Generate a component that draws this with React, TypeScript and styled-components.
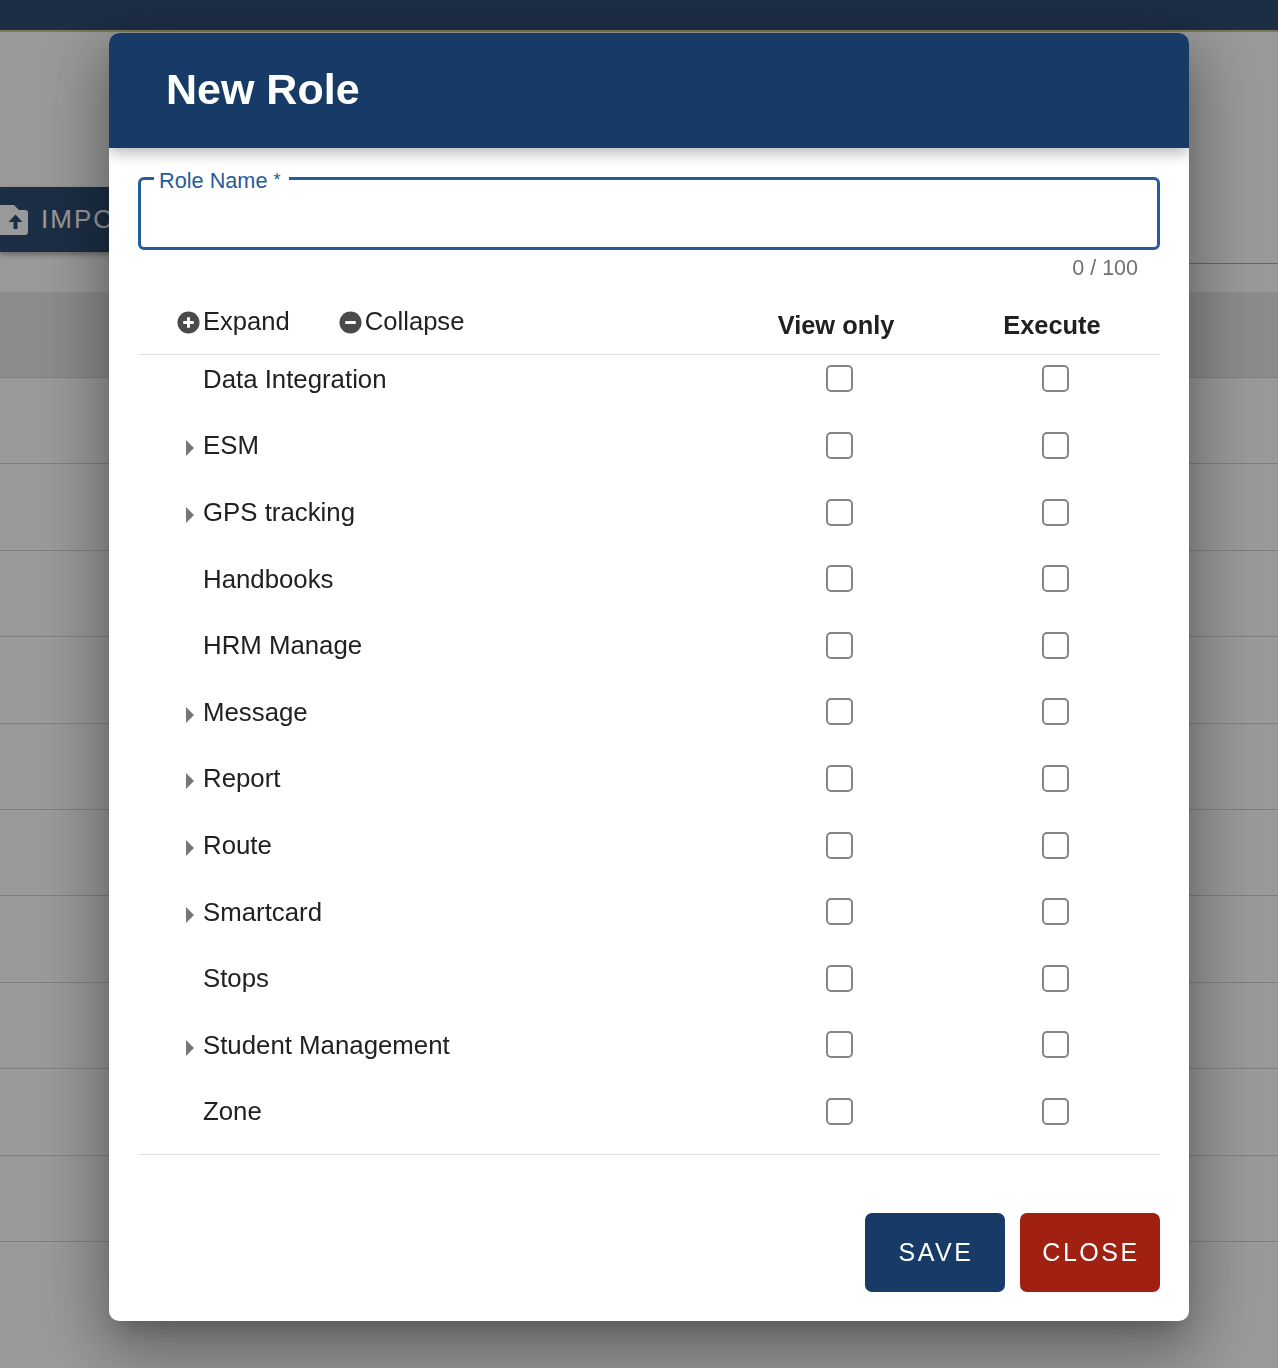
import React, { FC } from 'react';
import styled, { createGlobalStyle } from 'styled-components';

const modules = [
  { name: 'Data Integration', nested: false },
  { name: 'ESM', nested: true },
  { name: 'GPS tracking', nested: true },
  { name: 'Handbooks', nested: false },
  { name: 'HRM Manage', nested: false },
  { name: 'Message', nested: true },
  { name: 'Report', nested: true },
  { name: 'Route', nested: true },
  { name: 'Smartcard', nested: true },
  { name: 'Stops', nested: false },
  { name: 'Student Management', nested: true },
  { name: 'Zone', nested: false },
];

const backgroundRows = Array.from({ length: 10 }, (_, i) => i);

const App: FC = () => {
  return (
    <>
      <GlobalStyle />
      <Page>
        <TopBar />
        <Toolbar>
          <ImportButton>
            <svg width="28" height="30" viewBox="0 0 28 30">
              <path
                fill="#fff"
                d="M-2 0h16l5 5h6a3 3 0 0 1 3 3v19a3 3 0 0 1-3 3H-2z"
              />
              <path fill="#2f4d73" d="M15.5 9.5L8.5 17H13.5v7h4v-7h5z" />
            </svg>
            IMPORT
          </ImportButton>
          <SearchLine />
        </Toolbar>
        <TableHead />
        {backgroundRows.map(row => (
          <TableRow key={row} />
        ))}
      </Page>
      <Backdrop />
      <Modal>
        <ModalHeader>New Role</ModalHeader>
        <ModalBody>
          <Field>
            <FieldLabel>
              Role Name <Required>*</Required>
            </FieldLabel>
            <FieldInput />
          </Field>
          <Counter>0 / 100</Counter>
          <PermissionHead>
            <TreeTools>
              <TreeTool>
                <svg width="23" height="23" viewBox="0 0 24 24">
                  <circle cx="12" cy="12" r="11.5" fill="#4a4a4a" />
                  <path
                    fill="#fff"
                    d="M10.5 6.5h3v4h4v3h-4v4h-3v-4h-4v-3h4z"
                  />
                </svg>
                Expand
              </TreeTool>
              <TreeTool>
                <svg width="23" height="23" viewBox="0 0 24 24">
                  <circle cx="12" cy="12" r="11.5" fill="#4a4a4a" />
                  <path fill="#fff" d="M6.5 10.5h11v3h-11z" />
                </svg>
                Collapse
              </TreeTool>
            </TreeTools>
            <ColumnTitle>View only</ColumnTitle>
            <ColumnTitle>Execute</ColumnTitle>
          </PermissionHead>
          <PermissionList>
            {modules.map(({ name, nested }) => (
              <PermissionRow key={name}>
                <RowName>
                  <Caret $visible={nested} />
                  {name}
                </RowName>
                <CheckCell>
                  <Check type="checkbox" aria-label={`${name} view only`} />
                </CheckCell>
                <CheckCell>
                  <Check type="checkbox" aria-label={`${name} execute`} />
                </CheckCell>
              </PermissionRow>
            ))}
          </PermissionList>
          <Actions>
            <ActionButton $color="#173a66">SAVE</ActionButton>
            <ActionButton $color="#a02012">CLOSE</ActionButton>
          </Actions>
        </ModalBody>
      </Modal>
    </>
  );
};

export default App;

const GlobalStyle = createGlobalStyle`
  html, body {
    margin: 0;
    padding: 0;
    background: #fff;
  }

  body {
    font-family: "Liberation Sans", Arial, sans-serif;
    color: #212121;
    overflow: hidden;
  }

  * {
    box-sizing: border-box;
  }
`;

const Page = styled.div`
  width: 1278px;
  height: 1368px;
  overflow: hidden;
  background: #fff;
`;

const TopBar = styled.div`
  height: 32px;
  background: #2f4d73;
  border-bottom: 2px solid #d0c78c;
`;

const Toolbar = styled.div`
  display: flex;
  align-items: flex-start;
  justify-content: space-between;
  height: 260px;
  padding-top: 155px;
`;

const ImportButton = styled.div`
  display: flex;
  align-items: center;
  gap: 13px;
  width: 240px;
  height: 65px;
  color: #fff;
  background: #2f4d73;
  font-size: 26px;
  letter-spacing: 2px;
  box-shadow: 0 3px 5px rgba(0, 0, 0, 0.3);
`;

const SearchLine = styled.div`
  width: 400px;
  height: 77px;
  border-bottom: 1px solid #aaa;
`;

const TableHead = styled.div`
  height: 86px;
  background: #e8e8e8;
  border-bottom: 1px solid #d4d4d4;
`;

const TableRow = styled.div`
  height: 86.4px;
  border-bottom: 1px solid #d4d4d4;
`;

const Backdrop = styled.div`
  position: fixed;
  inset: 0;
  background: rgba(0, 0, 0, 0.4);
`;

const Modal = styled.div`
  position: fixed;
  top: 33px;
  left: 109px;
  width: 1080px;
  height: 1288px;
  overflow: hidden;
  background: #fff;
  border-radius: 10px;
  box-shadow: 0 15px 21px -10px rgba(0, 0, 0, 0.2),
    0 30px 60px 6px rgba(0, 0, 0, 0.2), 0 13px 70px 12px rgba(0, 0, 0, 0.18);
`;

const ModalHeader = styled.div`
  position: relative;
  display: flex;
  align-items: center;
  height: 115px;
  padding: 0 0 3px 57px;
  color: #fff;
  background: #173a66;
  font-size: 43px;
  font-weight: 700;
  box-shadow: 0 5px 14px rgba(0, 0, 0, 0.28);
`;

const ModalBody = styled.div`
  padding: 29px 29px 0;
`;

const Field = styled.div`
  position: relative;
  height: 73px;
`;

const FieldLabel = styled.label`
  position: absolute;
  top: -10px;
  left: 16px;
  width: 135px;
  padding: 0 4px 0 5px;
  color: #265c99;
  background: #fff;
  font-size: 21.7px;
  line-height: 26px;
`;

const Required = styled.span`
  font-size: 18px;
  vertical-align: 2px;
`;

const FieldInput = styled.input`
  display: block;
  width: 100%;
  height: 100%;
  border: 3px solid #265c99;
  border-radius: 6px;
  outline: none;
  background: transparent;
`;

const Counter = styled.div`
  height: 22px;
  margin-top: 7px;
  padding-right: 22px;
  color: #707070;
  font-size: 21.5px;
  line-height: 22px;
  text-align: right;
`;

const PermissionHead = styled.div`
  display: grid;
  grid-template-columns: 1fr 216px 216px;
  height: 76px;
  border-bottom: 1px solid #e0e0e0;
`;

const TreeTools = styled.div`
  display: flex;
  gap: 49px;
  padding: 27px 0 0 39px;
`;

const TreeTool = styled.div`
  display: flex;
  align-items: flex-start;
  gap: 3px;
  height: 30px;
  font-size: 25.6px;
  line-height: 30px;

  svg {
    margin-top: 5px;
  }
`;

const ColumnTitle = styled.div`
  padding-top: 31px;
  font-size: 25.4px;
  font-weight: 700;
  line-height: 30px;
  text-align: center;
`;

const PermissionList = styled.div`
  display: flex;
  flex-direction: column;
  gap: 20px;
  padding: 0.55px 0 19.45px;
  border-bottom: 1px solid #e0e0e0;
`;

const PermissionRow = styled.div`
  display: grid;
  grid-template-columns: 1fr 216px 216px;
  align-items: center;
  height: 46.6px;
`;

const RowName = styled.div`
  display: flex;
  align-items: center;
  padding: 1px 0 0 48px;
  font-size: 25.8px;
`;

const Caret = styled.span<{ $visible: boolean }>`
  width: 0;
  height: 0;
  margin: 5px 9px 0 0;
  border-style: solid;
  border-width: 8px 0 8px 8px;
  border-color: transparent transparent transparent
    ${({ $visible }) => ($visible ? '#777' : 'transparent')};
`;

const CheckCell = styled.div`
  display: flex;
  justify-content: center;
  padding-left: 7px;
`;

const Check = styled.input`
  appearance: none;
  width: 27px;
  height: 27px;
  margin: 0;
  border: 2px solid #858585;
  border-radius: 5px;
  background: #fff;
`;

const Actions = styled.div`
  display: flex;
  justify-content: flex-end;
  gap: 15px;
  margin-top: 58px;
`;

const ActionButton = styled.button<{ $color: string }>`
  width: 140px;
  height: 79px;
  padding: 0 0 0 2px;
  border: 0;
  border-radius: 7px;
  color: #fff;
  background: ${({ $color }) => $color};
  font-family: inherit;
  font-size: 25px;
  letter-spacing: 2.5px;
`;
